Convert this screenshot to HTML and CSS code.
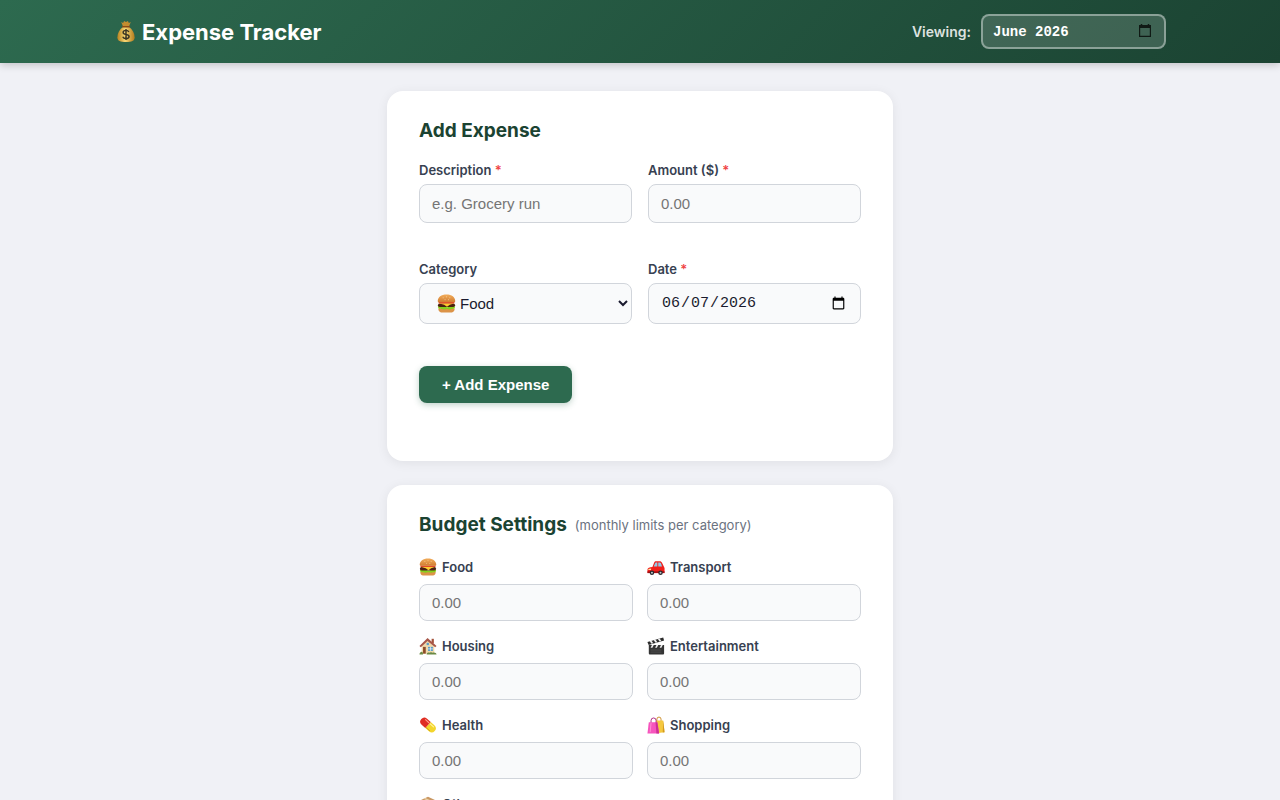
FILE: index.html
```
<!DOCTYPE html>
<html lang="en">
<head>
    <meta charset="UTF-8">
    <meta name="viewport" content="width=device-width, initial-scale=1.0">
    <title>Expense Tracker</title>
    <link rel="stylesheet" href="styles.css">
</head>
<body>
    <!-- Shared icons -->
    <svg class="sprite" aria-hidden="true">
        <linearGradient id="bun" x1="0" y1="0" x2="0" y2="1">
            <stop offset="0" stop-color="#f2ad5c"/>
            <stop offset="1" stop-color="#d07c30"/>
        </linearGradient>
        <linearGradient id="sack" x1="0" y1="0" x2="1" y2="0">
            <stop offset="0" stop-color="#b98320"/>
            <stop offset=".45" stop-color="#f7d774"/>
            <stop offset="1" stop-color="#b47a1c"/>
        </linearGradient>
        <symbol id="icon-money" viewBox="0 0 20 24">
            <path d="M5 2l2 1 1-2 2 1 2-1 1 2 2-1-2 5H7z" fill="#c48c2f"/>
            <path d="M7 7h6c4 3 6 7 6 11 0 4-3 5-9 5s-9-1-9-5c0-4 2-8 6-11z" fill="url(#sack)"/>
            <path d="M6.500 7h7" stroke="#8a4b16" stroke-width="1.600" stroke-linecap="round"/>
            <path d="M13 12.500c-.6-1.300-1.600-1.700-3-1.700-1.800 0-3 .8-3 2.200 0 3 6.200 1.400 6.200 4.300 0 1.400-1.300 2.200-3.200 2.200-1.700 0-2.900-.6-3.400-2M10 9.500v11.300" fill="none" stroke="#3a3424" stroke-width="1.500"/>
        </symbol>
        <symbol id="icon-calendar" viewBox="0 0 12 13">
            <path d="M2.500 0v2M9.500 0v2" stroke="currentColor" stroke-width="1.500"/>
            <path d="M0 1h12v3H0z" fill="currentColor"/>
            <path d="M.6 2.500h10.800v9.900H.6z" fill="none" stroke="currentColor" stroke-width="1.200"/>
        </symbol>
        <symbol id="icon-food" viewBox="0 0 20 20">
            <path d="M1.500 15h17v1c0 2.500-2 3.500-4.500 3.500H6c-2.500 0-4.500-1-4.500-3.500z" fill="#dc9348"/>
            <path d="M1 13.200c1.500-1 2.500 0 4 0s2-1 3.500 0 3 1 4.500 0 3.500-1 6 0c0 2.300-1.500 2.500-3 2.500s-2 1-3.500.5-2-.5-4 0-2.500-.5-4-.5-3.500 0-3.500-2.500z" fill="#86cf1c"/>
            <rect x="1" y="10" width="18" height="3.800" rx="1.900" fill="#4b2112"/>
            <path d="M1.500 9.800h17l-5 1.500-3 2.200-3-2.200z" fill="#ffcc2f"/>
            <rect x="1.500" y="8.300" width="17" height="1.700" rx=".8" fill="#e2492a"/>
            <path d="M.8 7.500C.8 3.300 4.500.5 10 .5s9.200 2.800 9.200 7c0 1-1 1.200-2 1.200H2.800c-1 0-2-.2-2-1.200z" fill="url(#bun)"/>
            <path d="M6 4h1M9.500 3h1M13 4h1M8 6h1M11.500 6h1" stroke="#ffe2ae" stroke-width=".7"/>
        </symbol>
        <symbol id="icon-transport" viewBox="0 0 20 20">
            <path d="M6 10l2-5c.4-1 1-1.500 2-1.500h4c1.500 0 2.200.6 2.700 1.800L19.500 11v5.500H.5V13c0-2 2.500-2.600 5.500-3z" fill="#f0201b"/>
            <path d="M7.500 9.500L9 5.700c.2-.6.6-.8 1-.8h1.500v4.600zM12.500 4.900H14c.8 0 1.200.4 1.500 1l1.200 3.600h-4.200z" fill="#91c9e5"/>
            <path d="M.5 14.800h19v2H.5z" fill="#a60f13"/>
            <path d="M1.500 12.200l3-.5v1.500h-3z" fill="#ffe7a0"/>
            <circle cx="5.500" cy="16.500" r="2.500" fill="#26272b"/>
            <circle cx="15" cy="16.500" r="2.500" fill="#26272b"/>
            <circle cx="5.500" cy="16.500" r="1.100" fill="#bfc4ca"/>
            <circle cx="15" cy="16.500" r="1.100" fill="#bfc4ca"/>
        </symbol>
        <symbol id="icon-housing" viewBox="0 0 20 20">
            <path d="M14 2h2.500v5H14z" fill="#a5533b"/>
            <path d="M3 9l7-6 7 6v9.500H3z" fill="#efd9ac"/>
            <path d="M.5 10L9.500 1 19.500 10l-1.500 1.500-8.500-7L2 11.500z" fill="#a8584a"/>
            <path d="M4.500 11h3v7.500h-3z" fill="#8d4b28"/>
            <path d="M10 11h5.500v4.500H10z" fill="#5a9cc8"/>
            <path d="M12.750 11v4.500M10 13.200h5.500" stroke="#fff" stroke-width=".7"/>
            <path d="M8.500 6.500h2.500v2.500H8.500z" fill="#5a9cc8"/>
            <path d="M.5 19.500c0-2 1.500-3 2.500-3s1.500 1 1.500 3zM8.500 19.500c0-2 2-2.500 3.500-2 1.500-1 2.500-.5 3 0 2-.7 4.500 0 4.500 2z" fill="#6b8a45"/>
        </symbol>
        <symbol id="icon-entertainment" viewBox="0 0 20 20">
            <path d="M2 9h17v9c0 1-.5 1.500-1.500 1.500h-14C2.500 19.500 2 19 2 18z" fill="#343434"/>
            <path d="M.5 5.500L18 .5l1 3.500L1.800 9z" fill="#2b2b2b"/>
            <path d="M3 4.800l2-.6 2 2.800-2 .6zM7.500 3.500l2-.6 2 2.800-2 .6zM12 2.200l2-.6 2 2.800-2 .6zM5.500 9h2L6 12H4zM10.500 9h2L11 12H9zM15.500 9h2L16 12h-2z" fill="#eee"/>
            <path d="M4 14.500h12M4 16.800h12" stroke="#666" stroke-width=".6"/>
        </symbol>
        <symbol id="icon-health" viewBox="0 0 20 20">
            <g transform="rotate(42 10 10)">
                <path d="M10 5.500h5.500a4.500 4.500 0 0 1 0 9H10z" fill="#f3d52b"/>
                <path d="M10 5.500H4.500a4.500 4.500 0 0 0 0 9H10z" fill="#df2d23"/>
                <path d="M4 7.500h5" stroke="#ff9c8a" stroke-width="1.200" stroke-linecap="round"/>
                <path d="M11 7.500h5" stroke="#fff3a2" stroke-width="1.200" stroke-linecap="round"/>
                <path d="M10 13.500h6" stroke="#cfa30b" stroke-width="1"/>
            </g>
        </symbol>
        <symbol id="icon-shopping" viewBox="0 0 20 20">
            <path d="M11 6V3.500a2.300 2.300 0 0 1 4.600 0V6" fill="none" stroke="#c9871c" stroke-width="1"/>
            <path d="M10 5h8l1.500 13-7 1z" fill="#f5c83e"/>
            <path d="M18 5l1.500 13-2 .3z" fill="#d29a20"/>
            <path d="M4.500 8V5a2.800 2.800 0 0 1 5.600 0v3" fill="none" stroke="#a81c7a" stroke-width="1"/>
            <path d="M2 7h9.500l2 12.500H.5z" fill="#f655bd"/>
            <path d="M9.500 7h2l2 12.500h-3z" fill="#cc2f95"/>
            <path d="M4.500 7.500L3.500 18" stroke="#ff93d6" stroke-width="1"/>
        </symbol>
        <symbol id="icon-other" viewBox="0 0 20 20">
            <path d="M1 6l9-4 9 4-9 4z" fill="#c99763"/>
            <path d="M1 6l9 4v9l-9-4z" fill="#b9824e"/>
            <path d="M19 6l-9 4v9l9-4z" fill="#98663a"/>
            <path d="M5 4.300l9 4v3l2-1v-3l-9-4z" fill="#ead0a5"/>
        </symbol>
    </svg>

    <header class="site-header">
        <div class="header-inner">
            <h1 class="brand"><svg class="brand-icon" aria-hidden="true"><use href="#icon-money"/></svg>Expense Tracker</h1>
            <div class="month-picker">
                <label for="month">Viewing:</label>
                <div class="month-field">
                    <input type="text" id="month" value="June 2026">
                    <svg class="month-icon" aria-hidden="true"><use href="#icon-calendar"/></svg>
                </div>
            </div>
        </div>
    </header>

    <main class="container">
        <section class="card">
            <h2>Add Expense</h2>
            <form class="expense-form">
                <div class="form-group">
                    <label for="description">Description <span class="required">*</span></label>
                    <input type="text" id="description" placeholder="e.g. Grocery run">
                    <span class="field-error"></span>
                </div>
                <div class="form-group">
                    <label for="amount">Amount ($) <span class="required">*</span></label>
                    <input type="number" id="amount" placeholder="0.00" min="0" step="0.01">
                    <span class="field-error"></span>
                </div>
                <div class="form-group">
                    <label for="category">Category</label>
                    <div class="select-wrap">
                        <svg class="select-icon" aria-hidden="true"><use href="#icon-food"/></svg>
                        <select id="category">
                            <option>Food</option>
                            <option>Transport</option>
                            <option>Housing</option>
                            <option>Entertainment</option>
                            <option>Health</option>
                            <option>Shopping</option>
                            <option>Other</option>
                        </select>
                    </div>
                    <span class="field-error"></span>
                </div>
                <div class="form-group">
                    <label for="date">Date <span class="required">*</span></label>
                    <input type="date" id="date" class="tall" value="2026-06-07">
                    <span class="field-error"></span>
                </div>
                <div class="form-actions">
                    <button type="button" class="btn-primary">+ Add Expense</button>
                </div>
            </form>
        </section>

        <section class="card">
            <h2>Budget Settings <span class="hint">(monthly limits per category)</span></h2>
            <div class="budget-grid">
                <div class="budget-item">
                    <label for="b-food"><svg class="icon" aria-hidden="true"><use href="#icon-food"/></svg>Food</label>
                    <input type="number" id="b-food" placeholder="0.00">
                </div>
                <div class="budget-item">
                    <label for="b-transport"><svg class="icon" aria-hidden="true"><use href="#icon-transport"/></svg>Transport</label>
                    <input type="number" id="b-transport" placeholder="0.00">
                </div>
                <div class="budget-item">
                    <label for="b-housing"><svg class="icon" aria-hidden="true"><use href="#icon-housing"/></svg>Housing</label>
                    <input type="number" id="b-housing" placeholder="0.00">
                </div>
                <div class="budget-item">
                    <label for="b-entertainment"><svg class="icon" aria-hidden="true"><use href="#icon-entertainment"/></svg>Entertainment</label>
                    <input type="number" id="b-entertainment" placeholder="0.00">
                </div>
                <div class="budget-item">
                    <label for="b-health"><svg class="icon" aria-hidden="true"><use href="#icon-health"/></svg>Health</label>
                    <input type="number" id="b-health" placeholder="0.00">
                </div>
                <div class="budget-item">
                    <label for="b-shopping"><svg class="icon" aria-hidden="true"><use href="#icon-shopping"/></svg>Shopping</label>
                    <input type="number" id="b-shopping" placeholder="0.00">
                </div>
                <div class="budget-item">
                    <label for="b-other"><svg class="icon" aria-hidden="true"><use href="#icon-other"/></svg>Other</label>
                    <input type="number" id="b-other" placeholder="0.00">
                </div>
            </div>
        </section>
    </main>
</body>
</html>
```

FILE: styles.css
```
* {
    box-sizing: border-box;
    margin: 0;
    padding: 0;
}

/* the page scrolls without a visible bar */
html {
    scrollbar-width: none;
}

body {
    font-family: Inter, sans-serif;
    background: #f0f1f6;
    color: #1a1a2e;
    min-height: 100vh;
}

.sprite {
    position: absolute;
    width: 0;
    height: 0;
}

/* Header */
.site-header {
    background: linear-gradient(135deg, #2d6a4f, #1b4332);
    color: #fff;
    box-shadow: 0 2px 8px rgba(0, 0, 0, 0.2);
}

.header-inner {
    max-width: 1100px;
    margin: 0 auto;
    padding: 14px 24px;
    display: flex;
    align-items: center;
    justify-content: space-between;
}

.brand {
    display: flex;
    align-items: center;
    gap: 4px;
    font-size: 22px;
    font-weight: 700;
}

.brand-icon {
    width: 24px;
    height: 23px;
}

.month-picker {
    display: flex;
    align-items: center;
    gap: 10px;
}

.month-picker label {
    font-size: 14px;
    font-weight: 600;
    color: rgba(255, 255, 255, 0.85);
}

.month-field {
    position: relative;
}

.month-picker input {
    display: block;
    width: 185px;
    height: 35px;
    padding: 0 10px;
    border: 2px solid rgba(255, 255, 255, 0.4);
    border-radius: 8px;
    background: rgba(255, 255, 255, 0.15);
    color: #fff;
    font-family: "Liberation Mono", monospace;
    font-size: 14px;
    font-weight: 700;
}

.month-icon {
    position: absolute;
    right: 15px;
    top: 10px;
    width: 12px;
    height: 13px;
    color: #101a15;
    pointer-events: none;
}

/* Layout */
.container {
    max-width: 554px;
    margin: 0 auto;
    padding: 28px 24px;
    display: flex;
    flex-direction: column;
    gap: 24px;
}

.card {
    background: #fff;
    border-radius: 16px;
    padding: 28px 32px;
    box-shadow: 0 2px 12px rgba(0, 0, 0, 0.07);
}

.card h2 {
    display: flex;
    align-items: center;
    gap: 8px;
    margin-bottom: 18px;
    font-size: 19px;
    line-height: 24px;
    font-weight: 700;
    color: #1b4332;
}

.hint {
    font-size: 13px;
    font-weight: 400;
    color: #6b7280;
}

/* Expense form */
.expense-form {
    display: grid;
    grid-template-columns: 1fr 1fr;
    gap: 16px;
}

.form-group {
    display: flex;
    flex-direction: column;
    gap: 5px;
    min-width: 0;
}

.card label {
    font-size: 13px;
    line-height: 18px;
    font-weight: 600;
    color: #374151;
}

.required {
    color: #ef4444;
}

.card input,
.card select {
    width: 100%;
    height: 39px;
    padding: 0 12px;
    border: 1px solid #d1d5db;
    border-radius: 8px;
    background: #f9fafb;
    color: #1a1a2e;
    font-family: "Liberation Sans", Arial, sans-serif;
    font-size: 15px;
}

.card input[type="date"] {
    font-family: "Liberation Mono", monospace;
}

.card .tall,
.card select {
    height: 41px;
}

.card select {
    padding-left: 36px;
    padding-right: 0;
}

.select-wrap {
    position: relative;
}

.select-icon {
    position: absolute;
    left: 18px;
    top: 11px;
    width: 19px;
    height: 19px;
    pointer-events: none;
}

.field-error {
    min-height: 16px;
    font-size: 12px;
}

.form-actions {
    grid-column: 1 / -1;
    padding: 5px 0 30px;
}

.btn-primary {
    height: 37px;
    padding: 0 23px;
    border: none;
    border-radius: 8px;
    background: #2d6a4f;
    color: #fff;
    font-family: "Liberation Sans", Arial, sans-serif;
    font-size: 15px;
    font-weight: 700;
    cursor: pointer;
    box-shadow: 0 2px 6px rgba(45, 106, 79, 0.3);
}

.btn-primary:hover {
    background: #1b4332;
}

/* Budget */
.budget-grid {
    display: grid;
    grid-template-columns: 1fr 1fr;
    gap: 15px 14px;
    padding-top: 2px;
}

.budget-item {
    display: flex;
    flex-direction: column;
    gap: 7px;
}

.budget-item label {
    display: flex;
    align-items: center;
    gap: 5px;
    line-height: 20px;
}

.budget-item input {
    height: 37px;
}

.icon {
    width: 18px;
    height: 18px;
}
```
